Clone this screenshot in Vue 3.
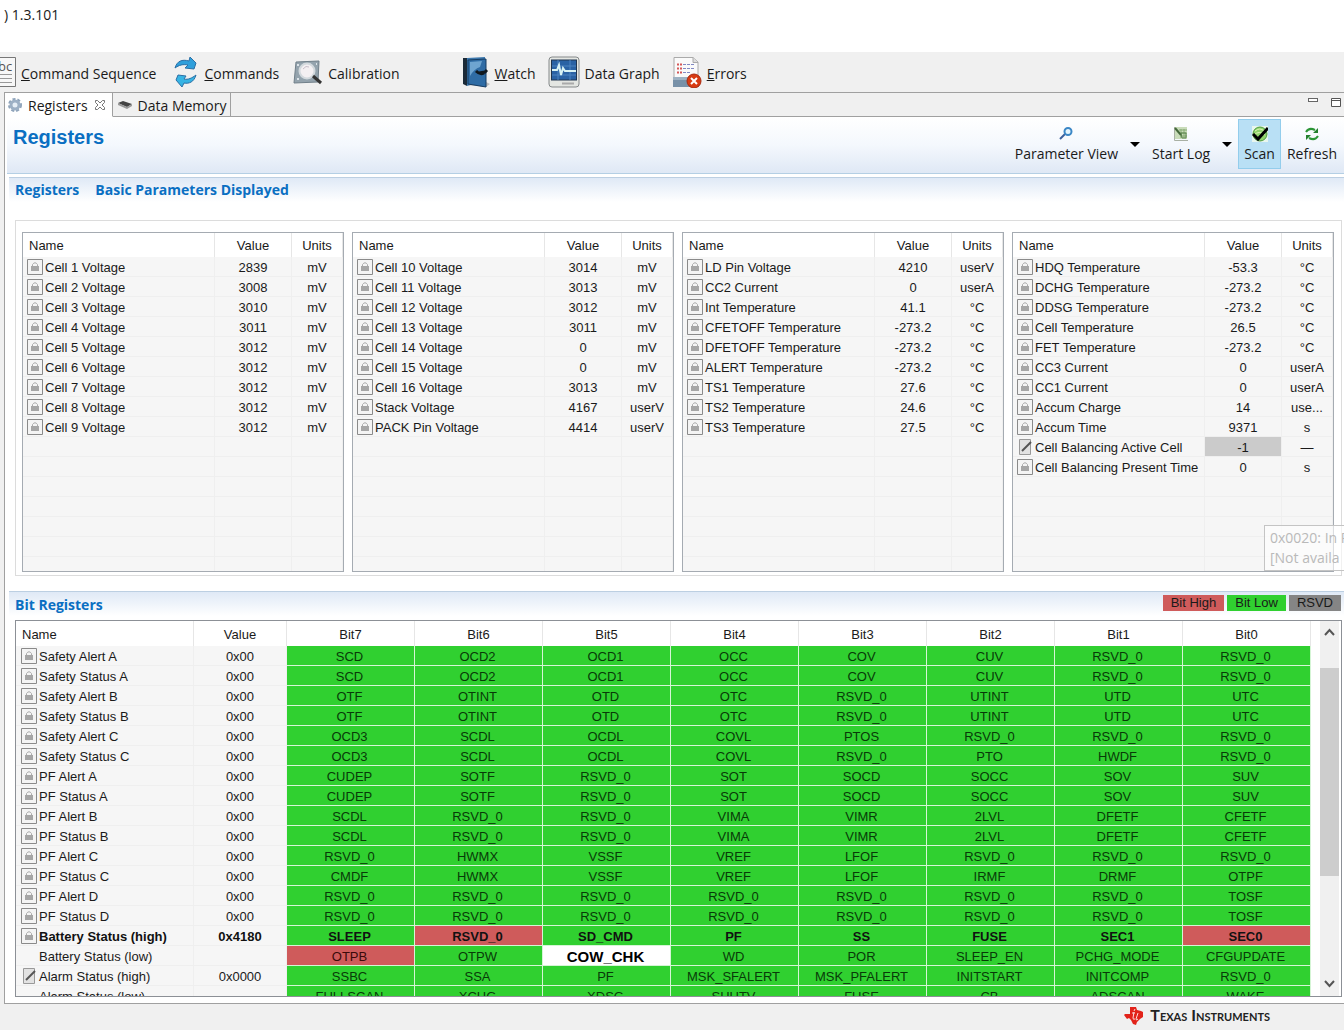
<script setup>
const rowCount = 16

const lists = [
  [
    ['Cell 1 Voltage', '2839', 'mV'], ['Cell 2 Voltage', '3008', 'mV'], ['Cell 3 Voltage', '3010', 'mV'],
    ['Cell 4 Voltage', '3011', 'mV'], ['Cell 5 Voltage', '3012', 'mV'], ['Cell 6 Voltage', '3012', 'mV'],
    ['Cell 7 Voltage', '3012', 'mV'], ['Cell 8 Voltage', '3012', 'mV'], ['Cell 9 Voltage', '3012', 'mV'],
  ],
  [
    ['Cell 10 Voltage', '3014', 'mV'], ['Cell 11 Voltage', '3013', 'mV'], ['Cell 12 Voltage', '3012', 'mV'],
    ['Cell 13 Voltage', '3011', 'mV'], ['Cell 14 Voltage', '0', 'mV'], ['Cell 15 Voltage', '0', 'mV'],
    ['Cell 16 Voltage', '3013', 'mV'], ['Stack Voltage', '4167', 'userV'], ['PACK Pin Voltage', '4414', 'userV'],
  ],
  [
    ['LD Pin Voltage', '4210', 'userV'], ['CC2 Current', '0', 'userA'], ['Int Temperature', '41.1', '°C'],
    ['CFETOFF Temperature', '-273.2', '°C'], ['DFETOFF Temperature', '-273.2', '°C'], ['ALERT Temperature', '-273.2', '°C'],
    ['TS1 Temperature', '27.6', '°C'], ['TS2 Temperature', '24.6', '°C'], ['TS3 Temperature', '27.5', '°C'],
  ],
  [
    ['HDQ Temperature', '-53.3', '°C'], ['DCHG Temperature', '-273.2', '°C'], ['DDSG Temperature', '-273.2', '°C'],
    ['Cell Temperature', '26.5', '°C'], ['FET Temperature', '-273.2', '°C'], ['CC3 Current', '0', 'userA'],
    ['CC1 Current', '0', 'userA'], ['Accum Charge', '14', 'use...'], ['Accum Time', '9371', 's'],
    ['Cell Balancing Active Cell', '-1', '—', 'edit'], ['Cell Balancing Present Time', '0', 's'],
  ],
].map((rows) => Array.from({ length: rowCount }, (_, i) => {
  const r = rows[i]
  return r ? { name: r[0], value: r[1], units: r[2], icon: r[3] || 'lock' } : { name: '', value: '', units: '', icon: '' }
}))

const bitHeads = ['Bit7', 'Bit6', 'Bit5', 'Bit4', 'Bit3', 'Bit2', 'Bit1', 'Bit0']

// A leading "!" marks a bit that reads high, a leading "*" the bit being edited.
const bitRows = [
  ['Safety Alert A', '0x00', 'SCD OCD2 OCD1 OCC COV CUV RSVD_0 RSVD_0'],
  ['Safety Status A', '0x00', 'SCD OCD2 OCD1 OCC COV CUV RSVD_0 RSVD_0'],
  ['Safety Alert B', '0x00', 'OTF OTINT OTD OTC RSVD_0 UTINT UTD UTC'],
  ['Safety Status B', '0x00', 'OTF OTINT OTD OTC RSVD_0 UTINT UTD UTC'],
  ['Safety Alert C', '0x00', 'OCD3 SCDL OCDL COVL PTOS RSVD_0 RSVD_0 RSVD_0'],
  ['Safety Status C', '0x00', 'OCD3 SCDL OCDL COVL RSVD_0 PTO HWDF RSVD_0'],
  ['PF Alert A', '0x00', 'CUDEP SOTF RSVD_0 SOT SOCD SOCC SOV SUV'],
  ['PF Status A', '0x00', 'CUDEP SOTF RSVD_0 SOT SOCD SOCC SOV SUV'],
  ['PF Alert B', '0x00', 'SCDL RSVD_0 RSVD_0 VIMA VIMR 2LVL DFETF CFETF'],
  ['PF Status B', '0x00', 'SCDL RSVD_0 RSVD_0 VIMA VIMR 2LVL DFETF CFETF'],
  ['PF Alert C', '0x00', 'RSVD_0 HWMX VSSF VREF LFOF RSVD_0 RSVD_0 RSVD_0'],
  ['PF Status C', '0x00', 'CMDF HWMX VSSF VREF LFOF IRMF DRMF OTPF'],
  ['PF Alert D', '0x00', 'RSVD_0 RSVD_0 RSVD_0 RSVD_0 RSVD_0 RSVD_0 RSVD_0 TOSF'],
  ['PF Status D', '0x00', 'RSVD_0 RSVD_0 RSVD_0 RSVD_0 RSVD_0 RSVD_0 RSVD_0 TOSF'],
  ['Battery Status (high)', '0x4180', 'SLEEP !RSVD_0 SD_CMD PF SS FUSE SEC1 !SEC0', 'lock', true],
  ['Battery Status (low)', '', '!OTPB OTPW *COW_CHK WD POR SLEEP_EN PCHG_MODE CFGUPDATE', 'none'],
  ['Alarm Status (high)', '0x0000', 'SSBC SSA PF MSK_SFALERT MSK_PFALERT INITSTART INITCOMP RSVD_0', 'edit'],
  ['Alarm Status (low)', '', 'FULLSCAN XCHG XDSG SHUTV FUSE CB ADSCAN WAKE', 'none'],
].map(([name, value, bits, icon = 'lock', bold = false]) => ({
  name, value, icon, bold,
  bits: bits.split(' ').map((b) => ({
    text: b.replace(/^[!*]/, ''),
    state: b[0] === '!' ? 'high' : b[0] === '*' ? 'active' : 'low',
  })),
}))
</script>

<template>
  <div class="app">
    <header class="titlebar">) 1.3.101</header>

    <nav class="toolbar" aria-label="Tools">
      <button class="tool first">
        <svg width="16" height="32" viewBox="0 0 16 32">
          <path d="M-2 1.5H15.500V30.500H-2z" fill="#f7f7f7" stroke="#777" />
          <text x="-2" y="15" font-size="13" fill="#555">bc</text>
          <path d="M0 18.500h12M0 22.500h12M0 26.500h12" stroke="#999" />
        </svg>
        <span><u>C</u>ommand Sequence</span>
      </button>
      <button class="tool commands">
        <svg width="26" height="32" viewBox="0 0 26 32">
          <path d="M2 12C4 5 9 3 16 5L17 1L23 7L21 13L12 12L15 9C10 8 6 9 2 12z" fill="#2f9fdb" stroke="#2b6fa5" />
          <path d="M23 19C21 26 16 28 11 27L9 31L3 24L5 19L13 20L11 23C15 24 19 22 23 19z" fill="#36b4e4" stroke="#2b6fa5" />
        </svg>
        <span><u>C</u>ommands</span>
      </button>
      <button class="tool calibration">
        <svg width="30" height="32" viewBox="0 0 30 32">
          <path d="M3 6L26 5L25 26L1 27z" fill="#94a3ad" stroke="#71808a" />
          <path d="M4 9h2M23 8h1M4 23h2" stroke="#dce3e8" stroke-width="2" />
          <circle cx="14" cy="15" r="7.500" fill="#f4f0f2" stroke="#d3d9dd" stroke-width="2" />
          <path d="M20 20L28 27" stroke="#333" stroke-width="3" />
          <path d="M10 13q3-4 6-2" stroke="#c8bfc9" fill="none" />
        </svg>
        <span>Calibration</span>
      </button>
      <button class="tool watch">
        <svg width="28" height="32" viewBox="0 0 28 32">
          <path d="M5 29L24 31L28 28L22 25z" fill="#bbb" />
          <path d="M1 2L5 2V30L1 28z" fill="#1b2a38" />
          <path d="M5 2L23 1V4L12 6V28L5 30z" fill="#3d78ad" />
          <path d="M6 4L24 3V31L6 28z" fill="#2f6ca5" stroke="#173d63" />
          <path d="M8 6L20 5L18 11Q12 13 8 20z" fill="#6ea4d0" />
          <path d="M14 15q4 4 8 2M17 17l6-1l2-2" stroke="#10181f" stroke-width="3" fill="none" />
        </svg>
        <span><u>W</u>atch</span>
      </button>
      <button class="tool graph">
        <svg width="32" height="32" viewBox="0 0 32 32">
          <rect x="1" y="1" width="30" height="30" rx="3" fill="#e4e6e2" stroke="#85898a" />
          <rect x="3.500" y="4" width="25" height="20" fill="#2a62a4" stroke="#20354e" />
          <path d="M4 10h24M4 19h24M10 4v20M22 4v20" stroke="#4c83bf" />
          <path d="M4 14h5l2-5 2 10 2-7 2 3h11" stroke="#d8f2f4" stroke-width="2" fill="none" />
          <path d="M14 27.500h12" stroke="#aaa" stroke-width="2" />
        </svg>
        <span>Data Graph</span>
      </button>
      <button class="tool errors">
        <svg width="30" height="32" viewBox="0 0 30 32">
          <path d="M2 1.500H21L26 6V22H2z" fill="#fafafa" stroke="#aaa" />
          <path d="M21 1.500V6.500H26" fill="#ddd" stroke="#aaa" />
          <path d="M5 8.500h5M5 12.500h5M5 16.500h5" stroke="#d65858" stroke-width="2" stroke-dasharray="2 1" />
          <path d="M11 8.500h11M11 12.500h11M11 16.500h7" stroke="#8189c4" stroke-dasharray="3 1" />
          <path d="M1 21H27V31H1z" fill="#7891a8" />
          <path d="M1 21H27V24H1z" fill="#9db1c2" />
          <circle cx="22" cy="25" r="7" fill="#d83b12" stroke="#a82a10" />
          <path d="M19 22l6 6M25 22l-6 6" stroke="#fff" stroke-width="2" />
        </svg>
        <span><u>E</u>rrors</span>
      </button>
    </nav>

    <main class="panel">
      <div class="tabs" role="tablist">
        <button class="tab active" role="tab" aria-selected="true">
          <svg width="14" height="16" viewBox="0 0 14 16">
            <circle cx="7" cy="8" r="6" fill="none" stroke="#8ea3ba" stroke-width="2" stroke-dasharray="3 2" />
            <circle cx="7" cy="8" r="4" fill="#e6eef6" stroke="#9db0c5" stroke-width="3" />
          </svg>
          <span>Registers</span>
          <svg width="12" height="12" viewBox="0 0 12 12">
            <path d="M1.500 1.500H3.500L6 4L8.500 1.500H10.500V3.500L8 6L10.500 8.500V10.500H8.500L6 8L3.500 10.500H1.500V8.500L4 6L1.500 3.500z" fill="#fff" stroke="#777" />
          </svg>
        </button>
        <button class="tab" role="tab" aria-selected="false">
          <svg width="16" height="12" viewBox="0 0 16 12">
            <path d="M1 4L6 2L15 5L10 8z" fill="#444" />
            <path d="M1 4L10 8V10L1 6zM10 8L15 5V7L10 10z" fill="#999" />
          </svg>
          <span>Data Memory</span>
        </button>
        <div class="tabfill">
          <button class="win" aria-label="Minimize"><svg width="12" height="14" viewBox="0 0 12 14"><rect x="1.500" y="5.500" width="9" height="3" fill="#fff" stroke="#666" /></svg></button>
          <button class="win" aria-label="Maximize"><svg width="12" height="14" viewBox="0 0 12 14"><path d="M1.500 5.500h9v8h-9zM1 7.500h10" fill="#fff" stroke="#555" /></svg></button>
        </div>
      </div>

      <div class="head">
        <h1>Registers</h1>
        <div class="actions">
          <button class="action">
            <svg width="16" height="16" viewBox="0 0 16 16">
              <path d="M7 8L2 13" stroke="#3c5f9b" stroke-width="2" />
              <circle cx="10" cy="5.500" r="3.500" fill="#e5f5fd" stroke="#3b87c6" stroke-width="2" />
            </svg>
            <span>Parameter View</span>
          </button>
          <button class="drop" aria-label="Parameter View options"><svg width="10" height="6" viewBox="0 0 10 6"><path d="M0 0H10L5 5z" fill="#000" /></svg></button>
          <button class="action">
            <svg width="16" height="16" viewBox="0 0 16 16">
              <path d="M1.500 1v13.500H15" stroke="#a8b0a4" fill="none" />
              <path d="M2 1h12v12H2z" fill="#c9dcba" />
              <path d="M6 4h8M6 7h8M7 10h7M8 3v9M11 3v9" stroke="#86ab74" />
              <path d="M2 2L8 9" stroke="#44683b" stroke-width="2" />
              <path d="M8 7H13V12H9z" fill="none" stroke="#5c8550" />
            </svg>
            <span>Start Log</span>
          </button>
          <button class="drop" aria-label="Start Log options"><svg width="10" height="6" viewBox="0 0 10 6"><path d="M0 0H10L5 5z" fill="#000" /></svg></button>
          <button class="action on" aria-pressed="true">
            <svg width="16" height="16" viewBox="0 0 16 16">
              <path d="M0 0H16V16H0z" fill="#e8f6ee" />
              <circle cx="8" cy="8" r="7" fill="#8fd36b" stroke="#4e9b40" />
              <path d="M3 5q5-4 9 0M2 9q5-5 11 0" stroke="#e3f7b9" fill="none" />
              <path d="M1 8L6 13L16 2" stroke="#000" stroke-width="3" fill="none" />
            </svg>
            <span>Scan</span>
          </button>
          <button class="action">
            <svg width="16" height="16" viewBox="0 0 16 16">
              <path d="M2 6Q5 1 11 4M14 10Q11 15 5 12" stroke="#2c9636" stroke-width="2" fill="none" />
              <path d="M14 2V7H9zM2 14V9H7z" fill="#23802d" />
            </svg>
            <span>Refresh</span>
          </button>
        </div>
      </div>

      <section>
        <div class="band">
          <h2>Registers</h2>
          <h2>Basic Parameters Displayed</h2>
        </div>
        <div class="group">
          <div v-for="(rows, n) in lists" :key="n" class="list">
            <table>
              <colgroup><col><col class="c-val"><col class="c-unit"></colgroup>
              <thead><tr><th class="left">Name</th><th>Value</th><th>Units</th></tr></thead>
              <tbody>
                <tr v-for="(row, i) in rows" :key="i">
                  <td class="left name">
                    <div class="cell">
                      <svg v-if="row.icon === 'lock'" width="16" height="16" viewBox="0 0 16 16"><path d="M.5.5h15v15H.5z" fill="#f4f4f4" stroke="#8a8a8a" /><path d="M5.500 8V5.500Q8 2 10.500 5.500V8" fill="none" stroke="#aaa" /><path d="M4 7h8v5H4z" fill="#a6a6a6" /></svg>
                      <svg v-else-if="row.icon === 'edit'" width="16" height="16" viewBox="0 0 16 16"><path d="M2.500.5h11v15h-11z" fill="#e2e2e2" stroke="#999" /><path d="M5 12L14 3" stroke="#555" stroke-width="2" /></svg>
                      <span>{{ row.name }}</span>
                    </div>
                  </td>
                  <td :class="{ edited: row.icon === 'edit' }">{{ row.value }}</td>
                  <td>{{ row.units }}</td>
                </tr>
              </tbody>
            </table>
          </div>
          <div class="tip" role="tooltip">0x0020: In R<br>[Not availa</div>
        </div>
      </section>

      <section>
        <div class="band bits-band">
          <h2>Bit Registers</h2>
          <div class="legend">
            <span class="high">Bit High</span><span class="low">Bit Low</span><span class="rsvd">RSVD</span>
          </div>
        </div>
        <div class="bits">
          <div class="bits-view">
            <table>
              <colgroup><col class="b-name"><col class="b-val"><col v-for="h in bitHeads" :key="h"></colgroup>
              <thead><tr><th class="left">Name</th><th>Value</th><th v-for="h in bitHeads" :key="h">{{ h }}</th></tr></thead>
              <tbody>
                <tr v-for="row in bitRows" :key="row.name" :class="{ bold: row.bold }">
                  <td class="left name">
                    <div class="cell">
                      <svg v-if="row.icon === 'lock'" width="16" height="16" viewBox="0 0 16 16"><path d="M.5.5h15v15H.5z" fill="#f4f4f4" stroke="#8a8a8a" /><path d="M5.500 8V5.500Q8 2 10.500 5.500V8" fill="none" stroke="#aaa" /><path d="M4 7h8v5H4z" fill="#a6a6a6" /></svg>
                      <svg v-else-if="row.icon === 'edit'" width="16" height="16" viewBox="0 0 16 16"><path d="M2.500.5h11v15h-11z" fill="#e2e2e2" stroke="#999" /><path d="M5 12L14 3" stroke="#555" stroke-width="2" /></svg>
                      <i v-else class="blank"></i>
                      <span>{{ row.name }}</span>
                    </div>
                  </td>
                  <td>{{ row.value }}</td>
                  <td v-for="(b, i) in row.bits" :key="i" :class="['bit', b.state]">{{ b.text }}</td>
                </tr>
              </tbody>
            </table>
          </div>
          <div class="scroll" aria-hidden="true">
            <svg width="19" height="24" viewBox="0 0 19 24"><path d="M5 14l4.500-5 4.500 5" fill="none" stroke="#555" stroke-width="2" /></svg>
            <div class="track"><div class="thumb"></div></div>
            <svg width="19" height="24" viewBox="0 0 19 24"><path d="M5 9l4.500 5L14 9" fill="none" stroke="#555" stroke-width="2" /></svg>
          </div>
        </div>
      </section>
    </main>

    <footer class="footer">
      <svg width="20" height="20" viewBox="0 0 20 20">
        <path d="M6 1H12L13 4L17 5L19 6V11L16 13L13 16L12 19L9 18L7 14L5 12L3 13L0 9L1 8H6z" fill="#e2231a" />
        <path d="M11 3l-1 2M8 7h3M10 6l-1 6q0 2 2 1M14 7l-2 6q0 2 2 0" stroke="#fbdcda" fill="none" />
      </svg>
      <span>Texas Instruments</span>
    </footer>
  </div>
</template>

<style>
body { margin: 0; background: #f0f0f0; }
</style>

<style scoped>
.app { background: #f0f0f0; color: #1a1a1a; font: 14px/20px "Open Sans", "Noto Sans", sans-serif; overflow: hidden; }
button { border: 0; background: none; padding: 0; margin: 0; color: inherit; font: inherit; white-space: nowrap; }
svg { display: block; flex: none; }
h1, h2 { margin: 0; }
.titlebar { height: 47px; padding: 5px 4px 0; background: #fff; }
.toolbar { display: flex; height: 40px; align-items: center; }
.tool { display: flex; align-items: center; gap: 5px; }
.tool span { padding-top: 3px; }
.commands { margin-left: 17px; }
.calibration { margin-left: 14px; }
.watch { margin-left: 62px; }
.graph { margin-left: 12px; }
.errors { margin-left: 12px; }
.panel { margin-left: 4px; background: #fff; border-left: 1px solid #a0a0a0; border-bottom: 1px solid #a0a0a0; padding-bottom: 6px; }
.tabs { display: flex; height: 25px; border-top: 1px solid #a0a0a0; box-sizing: border-box; }
.tab { display: flex; align-items: center; gap: 5px; padding: 0 4px; border-right: 1px solid #a0a0a0; border-bottom: 1px solid #a0a0a0; background: #f0f0f0; }
.tab span { padding-top: 2px; }
.tab.active { gap: 6px; background: #fff; border-bottom-color: #fff; padding: 0 6px 0 3px; }
.tabfill { flex: 1; display: flex; justify-content: flex-end; gap: 11px; padding-right: 2px; border-bottom: 1px solid #a0a0a0; background: #f0f0f0; }
.win { align-self: flex-start; }
.head { display: flex; justify-content: space-between; height: 56px; padding-left: 6px; margin-left: 2px; background: linear-gradient(#fff, #f4f8fd 50%, #dfe8f5); border-bottom: 1px solid #b4cfe4; }
h1 { font: bold 20px/40px "Liberation Sans", Arial, sans-serif; color: #0a6fc2; }
.actions { display: flex; align-items: flex-start; padding: 2px 1px 0 0; }
.action { display: flex; flex-direction: column; align-items: center; gap: 2px; height: 50px; padding: 6px 5px 0; box-sizing: border-box; border: 1px solid transparent; }
.action.on { background: #b9e0f5; border-color: #93cdec; }
.drop { padding: 23px 6px 0; }
.band { display: flex; align-items: center; gap: 16px; height: 24px; margin: 3px 0 0 4px; padding-left: 6px; border-top: 1px solid #bccfe2; background: linear-gradient(#dfe9f6, #fff); }
h2 { font: bold 14px/24px "Open Sans", "Noto Sans", sans-serif; color: #0a6fc2; }
.group { position: relative; display: flex; gap: 8px; margin: 18px 2px 0 10px; padding: 11px 7px 3px 6px; border: 1px solid #dcdcdc; }
.list { flex: 1; height: 338px; overflow: hidden; border: 1px solid #a5abb2; background: #f6f6f6; }
table { width: 100%; table-layout: fixed; border-collapse: separate; border-spacing: 0; font: 13px/17px "Liberation Sans", Arial, sans-serif; color: #1a1a1a; }
.c-val { width: 77px; }
.c-unit { width: 51px; }
th { height: 24px; padding: 0; background: #fff; font-weight: normal; text-align: center; border-right: 1px solid #e6e6e6; box-sizing: border-box; }
td { height: 20px; padding: 2px 0 0; background: #f6f6f6; text-align: center; white-space: nowrap; overflow: hidden; border-right: 1px solid #efefef; border-bottom: 1px solid #efefef; box-sizing: border-box; }
th.left { text-align: left; padding-left: 6px; }
td.left { text-align: left; }
.cell { display: flex; align-items: flex-start; gap: 2px; padding-left: 4px; }
.bits .cell { padding-left: 5px; }
.blank { width: 16px; }
.edited { background: #cbcbcb; }
.tip { position: absolute; right: -3px; bottom: 4px; width: 74px; padding: 2px 0 2px 5px; border: 1px solid #c4c4c4; border-right: 0; background: rgba(255, 255, 255, .6); color: #b9b9b9; white-space: nowrap; overflow: hidden; }
.bits-band { justify-content: space-between; margin-top: 15px; }
.bits-band h2 { padding-top: 2px; }
.legend { display: flex; gap: 3px; padding-right: 3px; font: 13px/16px "Liberation Sans", Arial, sans-serif; margin-bottom: 2px; }
.legend span { padding: 0 8px; }
.high { background: #cf5b5b; }
.low { background: #30d030; }
.rsvd { background: #858585; }
.bits { display: flex; height: 375px; margin: 4px 2px 0 10px; border: 1px solid #8c9096; overflow: hidden; }
.bits-view { flex: 1; min-width: 0; }
.bits th { height: 25px; padding-top: 1px; }
.b-name { width: 178px; }
.b-val { width: 93px; }
td.bit { padding-right: 2px; border-right-color: #d5f5d5; border-bottom-color: #d5f5d5; color: #083a08; }
td.bit.high { color: #3a0a0a; }
td.bit.active { background: #fff; font-weight: bold; font-size: 15px; color: #000; }
.bold td, .bold td.bit { font-weight: bold; color: #111; }
.scroll { display: flex; flex-direction: column; width: 19px; margin: 0 2px 0 9px; background: #f0f0f0; }
.track { flex: 1; padding-top: 23px; }
.thumb { height: 208px; background: #cdcdcd; }
.footer { display: flex; justify-content: flex-end; align-items: center; gap: 6px; height: 26px; padding-right: 74px; font: bold 16px/24px Lato, sans-serif; font-variant: small-caps; color: #222; }
.footer span { margin-top: -4px; }
.footer svg { margin-top: -2px; }
</style>
